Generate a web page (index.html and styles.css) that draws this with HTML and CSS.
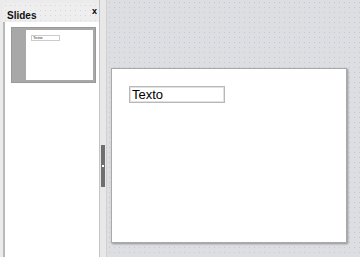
FILE: index.html
```html
<!DOCTYPE html>
<html>
<head>
  <meta charset="utf-8">
  <link rel="stylesheet" href="styles.css">
</head>
<body>
  <div id="app">
    <!-- Left: slide list -->
    <div id="slidePanel">
      <div class="panelHeader">
        <span class="panelTitle">Slides</span>
        <span class="panelClose">x</span>
      </div>
      <div class="slideList">
        <div class="thumb selected">
          <div class="thumbPage">
            <div class="thumbBox">Texto</div>
          </div>
        </div>
      </div>
    </div>

    <!-- Splitter -->
    <div id="splitter">
      <div class="grip"><span class="gripDot"></span></div>
    </div>

    <!-- Right: editing area -->
    <div id="workspace">
      <div class="slide">
        <div class="textBox">Texto</div>
      </div>
    </div>
  </div>
</body>
</html>
```

FILE: styles.css
```css
/* Page */
body {
  margin: 0;
  padding: 0;
  width: 360px;
  height: 257px;
  overflow: hidden;
  font-family: "Liberation Sans", Arial, sans-serif;
  background-color: #dddee1;
}

#app {
  display: flex;
  flex-direction: row;
  height: 257px;
}

/* Slide panel (left) */
#slidePanel {
  width: 96px;
  padding: 3px 0 0 3px;
  display: flex;
  flex-direction: column;
  background-color: #ebebeb;
  border-right: 1px solid #c4c4c4;
  flex-shrink: 0;
}

.panelHeader {
  display: flex;
  justify-content: space-between;
  align-items: flex-start;
  height: 19px;
  padding: 0 2px 0 4px;
  background-color: #eeeeee;
  background-image: radial-gradient(circle, #d6d6dc 0.6px, transparent 0.9px);
  background-size: 5px 5px;
}

.panelTitle {
  font-size: 10px;
  font-weight: bold;
  color: #111;
  line-height: 12px;
  margin-top: 7px;
}

.panelClose {
  font-size: 9px;
  font-weight: bold;
  color: #000;
  line-height: 9px;
  margin-top: 4px;
}

.slideList {
  flex: 1;
  background-color: #fff;
  border-left: 2px solid #b9b9b9;
  padding: 5px 0 0 6px;
}

.thumb {
  width: 85px;
  height: 56px;
  box-sizing: border-box;
  background-color: #a8a8a8;
  border: 1px solid #999;
  padding: 2px 2px 2px 14px;
}

.thumbPage {
  width: 100%;
  height: 100%;
  background-color: #fff;
  padding: 5px 0 0 5px;
  box-sizing: border-box;
}

.thumbBox {
  width: 26px;
  height: 4px;
  border: 1px solid #ccc;
  font-size: 4px;
  line-height: 4px;
  color: #333;
  padding-left: 1px;
}

/* Splitter */
#splitter {
  width: 6px;
  background-color: #e8e8e8;
  border-right: 1px solid #d0d0d0;
  display: flex;
  justify-content: center;
  flex-shrink: 0;
}

.grip {
  width: 4px;
  height: 42px;
  margin-top: 145px;
  background-color: #6f6f6f;
  display: flex;
  align-items: center;
  justify-content: center;
}

.gripDot {
  width: 2px;
  height: 2px;
  background-color: #fff;
}

/* Workspace (right) */
#workspace {
  flex: 1;
  padding: 68px 0 0 3px;
  background-color: #dddee1;
  background-image: radial-gradient(circle, #c6c7d2 0.6px, transparent 0.9px);
  background-size: 5px 5px;
}

.slide {
  width: 236px;
  height: 175px;
  background-color: #fff;
  border: 1px solid #a9a9a9;
  box-shadow: 1px 1px 2px rgba(0, 0, 0, 0.35);
  padding: 17px 0 0 17px;
  box-sizing: border-box;
  margin-left: 1px;
}

.textBox {
  width: 96px;
  height: 17px;
  border: 1px solid #b8b8b8;
  box-shadow: inset 0 0 0 1px #e2e2e2;
  font-size: 13px;
  line-height: 15px;
  color: #000;
  padding-left: 2px;
  box-sizing: border-box;
}
```
